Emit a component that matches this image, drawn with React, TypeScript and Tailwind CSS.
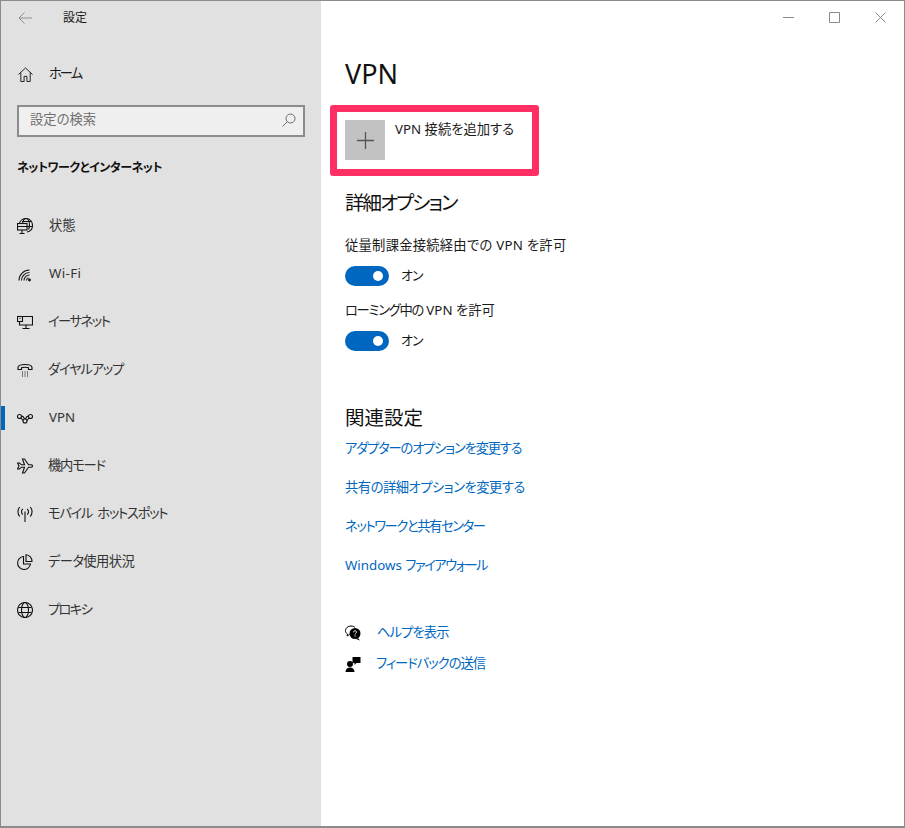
import { ReactNode } from 'react';

const S = ({ children }: { children: ReactNode }) => (
  <svg viewBox="0 0 16 16" className="w-4 h-4 shrink-0" fill="none" stroke="currentColor" strokeWidth="1.100">
    {children}
  </svg>
);

const navItems: { label: string; cls: string; icon: ReactNode; active?: boolean }[] = [
  {
    label: '状態',
    cls: '',
    icon: (
      <S>
        <path d="M2.500 5.500C3 2.500 6 .5 9 .5c3.800 0 6.500 3 6.500 7 0 3.500-2.500 6-5.500 6.500" />
        <path d="M5.500 5.500C6 2.500 7.500 .5 9 .5c2 0 3.500 3 3.500 7 0 1.500-.5 3-1 4M5 3.500h9.500M10 8.500h5.500" />
        <rect x="0.500" y="5.500" width="9.500" height="6.500" />
        <path d="M0.500 8.500h9.500M5 12v3M2.500 15.500h5" />
      </S>
    ),
  },
  {
    label: 'Wi-Fi',
    cls: 'tracking-[0.400px]',
    icon: (
      <S>
        <path d="M2 14.500A10.500 10.500 0 0 1 12.500 4M4.500 14.500a8 8 0 0 1 8-8M7 14.500a5.500 5.500 0 0 1 5.500-5.500M9.500 14.500a3 3 0 0 1 2-2.800" />
        <circle cx="12.500" cy="14" r="1.400" fill="currentColor" stroke="none" />
      </S>
    ),
  },
  {
    label: 'イーサネット',
    cls: '-ml-px tracking-[-1.500px]',
    icon: (
      <S>
        <path d="M5.500 2.500h10v8.500H2.500V7.500M9 11v3.500M5.500 14.500h7" />
        <rect x="0.500" y="2.500" width="5" height="5" />
        <path d="M2.500 4.500h1" />
      </S>
    ),
  },
  {
    label: 'ダイヤルアップ',
    cls: '-ml-px tracking-[-1.200px]',
    icon: (
      <S>
        <path d="M1 7.500V5.500C1 3.500 4.500 2.500 8 2.500s7 1 7 3v2h-3.500V5.800C10.500 5 5.500 5 4.500 5.800v1.700z" />
        <path d="M5 10h1M7.500 10h1M10 10h1M5 12h1M7.500 12h1M10 12h1M5 14h1M7.500 14h1M10 14h1" />
      </S>
    ),
  },
  {
    label: 'VPN',
    cls: '',
    active: true,
    icon: (
      <S>
        <circle cx="2.500" cy="6.500" r="2" />
        <circle cx="13.500" cy="6.500" r="2" />
        <circle cx="8" cy="11" r="2" />
        <path d="M4.500 6c1.500 0 2.500 1.500 3 3M11.500 6c-1.500 0-2.500 1.500-3 3M4 8c1 1.500 1.500 2 2.200 2.500M12 8c-1 1.500-1.500 2-2.200 2.500" />
      </S>
    ),
  },
  {
    label: '機内モード',
    cls: '-ml-px tracking-[-1.200px]',
    icon: (
      <S>
        <path d="M.5 5l1.500 3-1.500 3h2l2-1.800h3L5.500 15h2l4-5.800h2.500c1 0 1.500-.5 1.500-1.200s-.5-1.200-1.500-1.200h-2.500L7.500 1h-2l2 5.800h-3L2.500 5z" />
      </S>
    ),
  },
  {
    label: 'モバイル ホットスポット',
    cls: '-ml-px tracking-[-1.300px] [word-spacing:3px]',
    icon: (
      <S>
        <path d="M8 5.500V16" />
        <path d="M5.800 3a3.500 3.500 0 0 0 0 5.500M10.200 3a3.500 3.500 0 0 1 0 5.500M2.800 1a7 7 0 0 0 0 9.500M13.200 1a7 7 0 0 1 0 9.500" />
      </S>
    ),
  },
  {
    label: 'データ使用状況',
    cls: '-ml-px tracking-[-0.600px]',
    icon: (
      <S>
        <path d="M6.500 2.500a6.500 6.500 0 1 0 7 7.500H6.500z" />
        <path d="M9 .8a6.500 6.500 0 0 1 6 6.700H9z" />
      </S>
    ),
  },
  {
    label: 'プロキシ',
    cls: '-ml-px tracking-[-1.700px]',
    icon: (
      <S>
        <circle cx="8" cy="8" r="7.500" />
        <ellipse cx="8" cy="8" rx="3.500" ry="7.500" />
        <path d="M1.500 5.500h13M1.500 10.500h13" />
      </S>
    ),
  },
];

const Toggle = () => (
  <div className="flex items-center h-5 gap-3">
    <div className="w-11 h-5 rounded-full bg-[#0067c0] flex items-center justify-end pr-[6px]">
      <div className="w-[10px] h-[10px] rounded-full bg-white" />
    </div>
    <span className="text-[13px] text-[#1a1a1a] tracking-[-1px]">オン</span>
  </div>
);

const links = [
  { label: 'アダプターのオプションを変更する', cls: 'tracking-[-1.200px]' },
  { label: '共有の詳細オプションを変更する', cls: 'tracking-[-0.500px]' },
  { label: 'ネットワークと共有センター', cls: 'tracking-[-1.400px]' },
];

export default function App() {
  return (
    <div className="w-[905px] h-[828px] flex bg-white border-l border-r border-t border-b-2 border-[#8c8c8c] overflow-hidden text-[#1a1a1a] font-['Noto_Sans','Noto_Sans_CJK_JP',sans-serif] [font-feature-settings:'palt'] text-[13.300px]">
      {/* Sidebar */}
      <aside className="w-[320px] shrink-0 bg-[#e1e1e1] flex flex-col">
        <div className="h-[33px] flex items-center">
          <svg viewBox="0 0 14 12" className="w-[14px] h-3 ml-[17px] text-[#8e8e8e]" fill="none" stroke="currentColor">
            <path d="M14 6H1M6.500.5L1 6l5.500 5.500" />
          </svg>
          <span className="ml-[31px] text-[12px] leading-none">設定</span>
        </div>
        <div className="h-[48px] mt-[15px] pt-[2px] flex items-center pl-[17px] gap-[16px]">
          <svg viewBox="0 0 16 16" className="w-[15px] h-[15px]" fill="none" stroke="currentColor">
            <path d="M.5 8L8 1l7.500 7M3 6v9.500h3.500V10h3v5.500H13V6" />
          </svg>
          <span className="leading-none tracking-[-2px]">ホーム</span>
        </div>
        <div className="ml-4 mt-[8px] w-[288px] h-[32px] border-2 border-[#8c8c8c] bg-[#efefef] flex items-center justify-between pl-[11px] pr-[7px] pb-[2px]">
          <span className="text-[#6f6f6f]">設定の検索</span>
          <svg viewBox="0 0 14 14" className="w-[14px] h-[14px] text-[#6a6a6a]" fill="none" stroke="currentColor">
            <circle cx="8.500" cy="5.500" r="4.500" />
            <path d="M5.300 8.700L.5 13.500" />
          </svg>
        </div>
        <h2 className="ml-4 mt-[23px] leading-[16px] font-bold text-[12px] tracking-[-0.500px] text-[#111]">ネットワークとインターネット</h2>
        <nav className="mt-[26px] flex flex-col">
          {navItems.map((item) => (
            <div key={item.label} className="h-[48px] flex items-center relative pl-[16px] gap-[16px]">
              {item.active && <div className="absolute left-0 top-3 bottom-3 w-[4px] bg-[#0067c0]" />}
              <span className="text-[#111]">{item.icon}</span>
              <span className={`leading-none text-[#333] ${item.cls}`}>{item.label}</span>
            </div>
          ))}
        </nav>
      </aside>

      {/* Main */}
      <main className="flex-1 flex flex-col pl-[24px] relative">
        <div className="absolute top-0 right-0 h-[33px] flex items-center text-[#8a8a8a]">
          <svg viewBox="0 0 104 11" className="w-[104px] h-[11px] mr-[17px]" fill="none" stroke="currentColor">
            <path d="M0 5.500h11M46.500.5h10v10h-10zM92.500.5l10 10M102.500.5l-10 10" />
          </svg>
        </div>
        <h1 className="mt-[55px] text-[27px] leading-[36px] text-[#111]">VPN</h1>
        <div className="-ml-[15px] mt-[13px] w-[209px] h-[71px] border-[7px] border-[#ff2e63] rounded-[3px] flex items-start pt-2 pl-2 gap-[10px]">
          <div className="w-10 h-10 bg-[#c2c2c2] flex items-center justify-center text-[#555]">
            <svg viewBox="0 0 17 17" className="w-[17px] h-[17px]" fill="none" stroke="currentColor" strokeWidth="1.300">
              <path d="M8.500 0v17M0 8.500h17" />
            </svg>
          </div>
          <span className="leading-[18px]">VPN 接続を追加する</span>
        </div>
        <h2 className="mt-[14px] text-[19.500px] leading-[26px] tracking-[-1.900px] text-[#111]">詳細オプション</h2>
        <p className="mt-[20px] leading-[18px] tracking-[0.250px]">従量制課金接続経由での VPN を許可</p>
        <div className="mt-[12px]">
          <Toggle />
        </div>
        <p className="mt-[15px] leading-[18px]">
          <span className="tracking-[-1.300px]">ローミング中の</span> VPN を許可
        </p>
        <div className="mt-[12px]">
          <Toggle />
        </div>
        <h2 className="mt-[54px] text-[19.500px] leading-[26px] text-[#111]">関連設定</h2>
        <div className="mt-[8px] flex flex-col gap-[21px] text-[#0067c0]">
          {links.map((l) => (
            <a key={l.label} className={`leading-[18px] ${l.cls}`}>
              {l.label}
            </a>
          ))}
          <a className="leading-[18px]">
            Windows <span className="tracking-[-1.500px]">ファイアウォール</span>
          </a>
        </div>
        <div className="mt-[50px] flex items-center gap-[16px] h-[18px] text-[#0067c0]">
          <svg viewBox="0 0 16 16" className="w-4 h-4 text-black shrink-0">
            <path d="M6 1C2.800 1 .5 3 .5 5.500c0 1.500.8 2.700 2 3.500L2 11l2.500-1.500" fill="none" stroke="currentColor" />
            <path d="M6 1c1.500 0 3 .5 4 1.500" fill="none" stroke="currentColor" />
            <circle cx="10" cy="8.500" r="5.500" fill="currentColor" />
            <path d="M13 13l2 2.500-4-1.500z" fill="currentColor" />
            <path d="M8.500 7.300c0-1 .8-1.500 1.500-1.500s1.500.5 1.500 1.300c0 1.200-1.500 1.200-1.500 2.400M10 10.300v1.200" fill="none" stroke="white" />
          </svg>
          <span className="tracking-[-0.900px]">ヘルプを表示</span>
        </div>
        <div className="mt-[13px] flex items-center gap-[15px] h-[18px] text-[#0067c0]">
          <svg viewBox="0 0 16 16" className="w-4 h-4 text-black shrink-0">
            <circle cx="5" cy="8" r="3" fill="currentColor" />
            <path d="M.5 16c0-3 2-4.500 4.500-4.500s4.500 1.500 4.500 4.500z" fill="currentColor" />
            <path d="M7.500 1h8v6h-4l-2 2V7h-2z" fill="currentColor" />
          </svg>
          <span className="tracking-[-1px]">フィードバックの送信</span>
        </div>
      </main>
    </div>
  );
}
